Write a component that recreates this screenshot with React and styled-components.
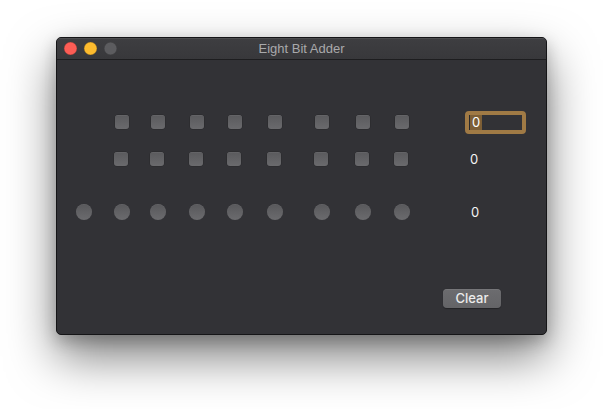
import styled, { createGlobalStyle } from "styled-components";

const GlobalStyle = createGlobalStyle`
  html, body {
    margin: 0;
    padding: 0;
    background: #ffffff;
    font-family: "Liberation Sans", "Noto Sans", Arial, sans-serif;
  }
`;

const Page = styled.div`
  width: 603px;
  height: 409px;
  padding: 37px 0 0 56px;
  box-sizing: border-box;
  overflow: hidden;
`;

const Window = styled.div`
  width: 491px;
  height: 298px;
  box-sizing: border-box;
  border-radius: 5px;
  background: #323236;
  border: 1px solid #151517;
  box-shadow: 0 22px 48px rgba(0, 0, 0, 0.5), 0 6px 16px rgba(0, 0, 0, 0.22);
  overflow: hidden;
  display: flex;
  flex-direction: column;
`;

const TitleBar = styled.div`
  position: relative;
  height: 21px;
  flex: none;
  display: flex;
  align-items: center;
  padding-left: 7px;
  gap: 7px;
  background: linear-gradient(#3e3e41, #38383b);
  border-bottom: 1px solid #1d1d1f;
  box-shadow: inset 0 1px 0 rgba(255, 255, 255, 0.08);
`;

const Light = styled.span`
  width: 13px;
  height: 13px;
  border-radius: 50%;
  background: ${(p) => p.$color};
  box-shadow: inset 0 0 0 0.5px rgba(0, 0, 0, 0.25);
`;

const Title = styled.div`
  position: absolute;
  left: 0;
  right: 0;
  top: 0;
  height: 21px;
  line-height: 21px;
  text-align: center;
  font-size: 13px;
  color: #a9a9ab;
  pointer-events: none;
`;

const Content = styled.div`
  flex: 1;
  padding-top: 50px;
`;

const Row = styled.div`
  display: grid;
  grid-template-columns: 38px 36px 39px 38px 40px 47px 41px 39px 71px 1fr;
  height: 24px;
  align-items: center;
  padding-left: ${(p) => 19 + (p.$shift || 0)}px;
  margin-top: ${(p) => p.$top || 0}px;
`;

const Cell = styled.div`
  width: 16px;
  height: 24px;
  display: flex;
  align-items: center;
  justify-content: center;
  grid-column: ${(p) => p.$col + 1};
`;

const Box = styled.span`
  width: 14px;
  height: 14px;
  box-sizing: border-box;
  border-radius: 3px;
  background: linear-gradient(#5a5a5d, #6a6a6d);
  box-shadow: inset 0 0.5px 0 rgba(255, 255, 255, 0.12), 0 0 0 0.5px rgba(0, 0, 0, 0.2);
`;

const Dot = styled.span`
  width: 16px;
  height: 16px;
  border-radius: 50%;
  background: linear-gradient(#58585b, #6b6b6e);
  box-shadow: inset 0 0.5px 0 rgba(255, 255, 255, 0.1);
`;

const Value = styled.div`
  grid-column: 10;
  padding-left: 6px;
  font-family: Inter, "Liberation Sans", sans-serif;
  font-size: 13px;
  color: #f4f4f4;
`;

const Field = styled.div`
  grid-column: 10;
  width: 61px;
  height: 23px;
  box-sizing: border-box;
  border: 4px solid #a07a45;
  border-radius: 4px;
  background: #323236;
  display: flex;
  align-items: center;
  font-family: Inter, "Liberation Sans", sans-serif;
  font-size: 13px;
  color: #ffffff;
`;

const Selected = styled.span`
  display: inline-block;
  background: #7d5f36;
  padding: 0 2px;
  line-height: 15px;
  border-left: 1px solid #2a2a2c;
`;

const Footer = styled.div`
  display: flex;
  justify-content: flex-end;
  padding-right: 45px;
  margin-top: 65px;
`;

const Button = styled.button`
  width: 58px;
  height: 19px;
  padding: 0;
  border: none;
  border-radius: 4px;
  background: linear-gradient(#6c6c6f, #646467);
  box-shadow: inset 0 0.5px 0 rgba(255, 255, 255, 0.15), 0 0.5px 1px rgba(0, 0, 0, 0.3);
  color: #ececec;
  font-family: Inter, "Liberation Sans", sans-serif;
  font-weight: 500;
  font-size: 13px;
  line-height: 19px;
`;

const bits = [1, 2, 3, 4, 5, 6, 7, 8];
const sums = [0, 1, 2, 3, 4, 5, 6, 7, 8];

export default function App() {
  return (
    <Page>
      <GlobalStyle />
      <Window>
        <TitleBar>
          <Light $color="#fd5d55" />
          <Light $color="#fdbb2e" />
          <Light $color="#5c5c5f" />
          <Title>Eight Bit Adder</Title>
        </TitleBar>
        <Content>
          <Row>
            {bits.map((c) => (
              <Cell key={c} $col={c}>
                <Box />
              </Cell>
            ))}
            <Field>
              <Selected>0</Selected>
            </Field>
          </Row>
          <Row $top={13} $shift={-1}>
            {bits.map((c) => (
              <Cell key={c} $col={c}>
                <Box />
              </Cell>
            ))}
            <Value>0</Value>
          </Row>
          <Row $top={29}>
            {sums.map((c) => (
              <Cell key={c} $col={c}>
                <Dot />
              </Cell>
            ))}
            <Value>0</Value>
          </Row>
          <Footer>
            <Button type="button">Clear</Button>
          </Footer>
        </Content>
      </Window>
    </Page>
  );
}
